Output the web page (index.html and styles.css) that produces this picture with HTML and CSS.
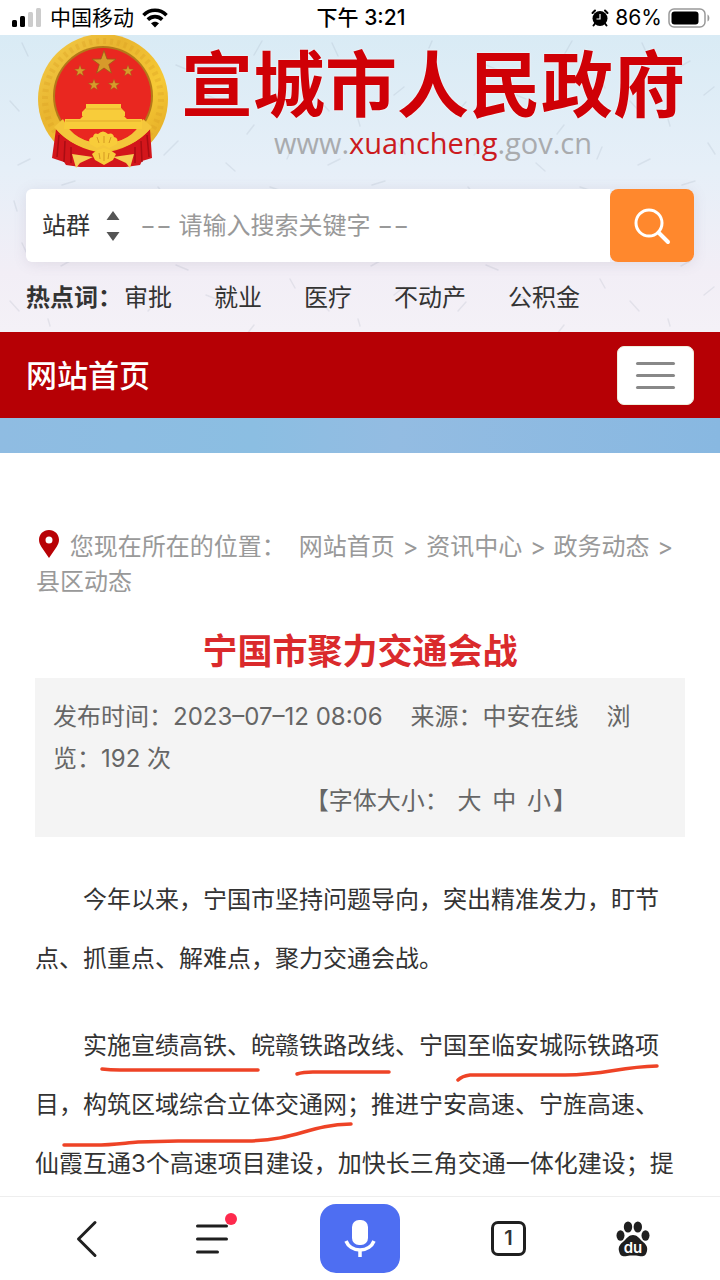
FILE: index.html
```html
<!DOCTYPE html>
<html lang="zh-CN">

<head>
    <meta charset="utf-8" />
    <meta name="viewport" content="width=device-width, initial-scale=1" />
    <title>宁国市聚力交通会战</title>
    <link rel="stylesheet" href="styles.css">
</head>

<body>

<!-- 状态栏 -->
<div class="status">
    <div class="status-left">
        <svg width="30" height="20" viewBox="0 0 30 20">
            <rect x="0" y="12" width="5" height="7" rx="1.5" fill="#000"/>
            <rect x="8" y="8" width="5" height="11" rx="1.5" fill="#000"/>
            <rect x="16" y="4" width="5" height="15" rx="1.5" fill="#ccc"/>
            <rect x="24" y="0" width="5" height="19" rx="1.5" fill="#ccc"/>
        </svg>
        <span>中国移动</span>
        <svg width="26" height="20" viewBox="0 0 26 20" fill="none" stroke="#000" stroke-width="3.6">
            <path d="M1.5 7.2C8 .6 18 .6 24.5 7.2"/>
            <path d="M5.8 11.6c4.200-4 10.200-4 14.400 0"/>
            <path d="M13 19.500l-4-4.200c2.200-2.100 5.800-2.100 8 0z" fill="#000" stroke="none"/>
        </svg>
    </div>
    <div class="status-time">下午 3:21</div>
    <div class="status-right">
        <svg width="18" height="18" viewBox="0 0 18 18">
            <circle cx="9" cy="9.500" r="7.500" fill="#000"/>
            <path d="M1.500 4L4 1.500M16.500 4L14 1.500M4 14.500l-1.500 2M14 14.500l1.500 2" stroke="#000" stroke-width="2" stroke-linecap="round"/>
            <path d="M9 5v5H5.500" stroke="#fff" stroke-width="1.200" fill="none"/>
        </svg>
        <span>86%</span>
        <svg width="42" height="20" viewBox="0 0 42 20">
            <rect x="1" y="1" width="36" height="18" rx="5" fill="none" stroke="#999" stroke-width="1.500"/>
            <rect x="3.500" y="3.500" width="27" height="13" rx="3" fill="#000"/>
            <path d="M39.500 6.500c2.500 1 2.500 6 0 7z" fill="#999"/>
        </svg>
    </div>
</div>

<!-- 头部 -->
<header class="header">
    <svg class="header-bg" width="100%" height="100%" aria-hidden="true">
        <defs>
            <pattern id="grain" width="310" height="200" patternUnits="userSpaceOnUse">
                <g fill="none" stroke="#8796a8" stroke-opacity=".16" stroke-width="1.500" stroke-linecap="round">
                    <path d="M22 8l6 13M70 26l-9 5M122 6l-3 7M176 30l12 5M262 6l-8 14M290 44l5 9"/>
                    <path d="M10 66l9 10M48 84l2 7M94 52l-10 8M148 76l8-9M206 60l10 4M254 90l-7 9"/>
                    <path d="M30 124l-12 6M88 108l7 11M130 116l3-13M178 106l-14 14M226 128l9 8M292 112l-5 12"/>
                    <path d="M14 166l3 10M62 150l13-4M110 176l-8 11M158 152l10 12M204 172l-3-8M270 152l12 4"/>
                    <path d="M42 192l11 5M134 192l-5 5M188 192l12-4M282 182l-7 12"/>
                </g>
            </pattern>
        </defs>
        <rect width="100%" height="100%" fill="url(#grain)"/>
    </svg>

    <a class="logo" href="#">
        <svg class="emblem" width="134" height="136" viewBox="0 0 134 136">
            <defs>
                <linearGradient id="gold" x1="0" y1="0" x2="1" y2="1">
                    <stop offset="0" stop-color="#f5cf4c"/>
                    <stop offset=".35" stop-color="#e9b52f"/>
                    <stop offset=".65" stop-color="#f6c935"/>
                    <stop offset="1" stop-color="#dc9f20"/>
                </linearGradient>
                <path id="star" d="M0-10L2.400-3.200 9.500-3.100 3.800 1.200 5.900 8.100 0 4 -5.900 8.100 -3.800 1.200 -9.500-3.100 -2.400-3.200z"/>
            </defs>
            <circle cx="67" cy="64" r="65" fill="url(#gold)"/>
            <circle cx="67" cy="64" r="58" fill="none" stroke="#d89d22" stroke-opacity=".3" stroke-width="6" stroke-dasharray="3 4"/>
            <circle cx="67" cy="61" r="50" fill="#b47819"/>
            <circle cx="67" cy="61" r="48" fill="#e92720"/>
            <!-- 红绸 -->
            <path d="M20 94q18 20 47 24 29-4 47-24l2 29-10 3-2 4-14 2H44l-14-2-2-3-12-4z" fill="#d3161b"/>
            <path d="M23 100l-2 22M29 106l-1 21M35 112v16M111 100l2 22M105 106l1 21M99 112v16" stroke="#a90d13" stroke-width="1.500"/>
            <path d="M18 92q18 22 49 24 31-2 49-24l-9-8Q96 108 67 108T27 84z" fill="#f4c63b"/>
            <g fill="#d79a2b" stroke="#916017" stroke-width=".6">
                <use href="#star" transform="translate(68 28) scale(1.250)"/>
                <use href="#star" transform="translate(44 36) scale(.600)"/>
                <use href="#star" transform="translate(92 36) scale(.600)"/>
                <use href="#star" transform="translate(58 50) scale(.600)"/>
                <use href="#star" transform="translate(78 50) scale(.600)"/>
            </g>
            <path d="M28 94h78v-10H91l-3-3H47l-3 3H29z" fill="#f8cc3a"/>
            <path d="M50 69h35v4l4 4v4H46v-4l4-4z" fill="#f8cc3a"/>
            <path d="M50 74h36M30 86h75" stroke="#e2ab2c" stroke-width="1"/>
            <path d="M35 95h64q-13 13-32 13T35 95z" fill="#e92720"/>
            <path d="M54 109q-3-6 3-7 1-5 5-3 5-5 10 0 5-2 6 3 5 1 3 7l-8 4-6-3-6 3z" fill="#f8cc3a"/>
            <path d="M56 119l5-4 7-2 6 2 6 4-3 6-9 5-9-5z" fill="#f8cc3a"/>
            <path d="M36 119l21 3-13 6-4 5zM98 119l-21 3 13 6 4 5z" fill="#f5cf55"/>
            <path d="M63 108l-2-6M68 108v-7M73 108l2-6M63 118l1 6M68 117v9M73 118l-1 6" stroke="#d49822" stroke-width="1"/>
        </svg>
        <span class="logo-text">
            <strong>宣城市人民政府</strong>
            <span class="logo-url">www.<b>xuancheng</b>.gov.cn</span>
        </span>
    </a>

    <form class="search">
        <div class="search-box">
            <label class="site">
                <select aria-label="站群">
                    <option>站群</option>
                </select>
                <svg width="14" height="30" viewBox="0 0 14 30" fill="#555">
                    <path d="M7 0l6.500 9H.5zM7 30l6.500-9H.5z"/>
                </svg>
            </label>
            <input type="text" aria-label="搜索关键字" placeholder="−− 请输入搜索关键字 −−">
        </div>
        <button type="button" class="search-btn" aria-label="搜索">
            <svg width="38" height="38" viewBox="0 0 38 38" fill="none" stroke="#fff" stroke-linecap="round">
                <circle cx="16" cy="16" r="13" stroke-width="3"/>
                <path d="M25.500 25.500L35 35" stroke-width="4"/>
            </svg>
        </button>
    </form>

    <div class="hot">
        <b>热点词：</b>
        <a href="#">审批</a>
        <a href="#">就业</a>
        <a href="#">医疗</a>
        <a href="#">不动产</a>
        <a href="#">公积金</a>
    </div>
</header>

<!-- 导航 -->
<nav class="nav">
    <a href="#">网站首页</a>
    <button type="button" class="nav-btn" aria-label="菜单">
        <span></span>
        <span></span>
        <span></span>
    </button>
</nav>
<div class="banner"></div>

<!-- 正文 -->
<main class="main">
    <div class="crumb">
        <svg width="20" height="28" viewBox="0 0 20 28">
            <path fill-rule="evenodd" d="M10 0C4.300 0 0 4.300 0 9.800c0 2.700 1 4.700 2.300 6.900L10 28l7.700-11.300C19 14.500 20 12.500 20 9.800 20 4.300 15.700 0 10 0zm0 6.500a3.500 3.500 0 1 1 0 7 3.500 3.500 0 0 1 0-7z" fill="#b80206"/>
        </svg>
        您现在所在的位置：&ensp;<a href="#">网站首页</a> &gt; <a href="#">资讯中心</a> &gt; <a href="#">政务动态</a> &gt; <a href="#">县区动态</a>
    </div>

    <h1 class="title">宁国市聚力交通会战</h1>

    <div class="info">
        <p>发布时间：2023–07–12 08:06<span class="source">来源：中安在线</span>浏览：192 次</p>
        <p class="size">【字体大小： <a href="#">大</a> <a href="#">中</a> <a href="#">小</a>】</p>
    </div>

    <article class="article">
        <p>今年以来，宁国市坚持问题导向，突出精准发力，盯节点、抓重点、解难点，聚力交通会战。</p>
        <p class="marked">实施宣绩高铁、皖赣铁路改线、宁国至临安城际铁路项目，构筑区域综合立体交通网；推进宁安高速、宁旌高速、仙霞互通3个高速项目建设，加快长三角交通一体化建设；提
            <!-- 手写红线 -->
            <svg class="marks" width="650" height="150" viewBox="0 0 650 150" fill="none" stroke="#ee4326" stroke-width="3.500" stroke-linecap="round">
                <path d="M67 53q8 1 18 1H223"/>
                <path d="M262 58q6-2 16-2H354"/>
                <path d="M423 64q4-4 12-5H530c42 0 52-8 92-9"/>
                <path d="M29 129h30c20 0 30-2 44-3l40-1H213c50-1 60-16 103-17"/>
            </svg>
        </p>
    </article>
</main>

<!-- 底部工具栏 -->
<footer class="toolbar">
    <button type="button" aria-label="返回">
        <svg width="22" height="38" viewBox="0 0 22 38" fill="none" stroke="#1f1f1f" stroke-width="3" stroke-linecap="round" stroke-linejoin="round">
            <path d="M19 2.500L2.500 19 19 35.500"/>
        </svg>
    </button>
    <button type="button" class="menu" aria-label="菜单">
        <svg width="32" height="30" viewBox="0 0 32 30" stroke="#1f1f1f" stroke-width="3" stroke-linecap="round">
            <path d="M1.500 2h29M1.500 15h29M1.500 28h20"/>
        </svg>
        <i class="dot"></i>
    </button>
    <button type="button" class="mic" aria-label="语音">
        <svg width="34" height="38" viewBox="0 0 34 38">
            <rect x="9" y="0" width="16" height="25" rx="7" fill="#fff"/>
            <path d="M3 21c2 5 7 9 14 9s12-4 14-9M17 30v7" fill="none" stroke="#fff" stroke-width="3.500"/>
        </svg>
    </button>
    <button type="button" aria-label="窗口">
        <span class="tab">1</span>
    </button>
    <button type="button" aria-label="百度首页">
        <svg width="34" height="36" viewBox="0 0 34 36" fill="#1f1f1f">
            <ellipse cx="4.500" cy="14.500" rx="4" ry="5.200"/>
            <ellipse cx="12" cy="6" rx="4.200" ry="5.500"/>
            <ellipse cx="21.800" cy="6" rx="4.200" ry="5.500"/>
            <ellipse cx="29.500" cy="14.500" rx="4" ry="5.200"/>
            <path d="M17 14c4 0 6 3 9 6 4 3 6 6 5 10-1 5-4 6-8 5-4-.6-8-.6-12 0-4 1-7 0-8-5-1-4 1-7 5-10 3-3 5-6 9-6z"/>
            <text x="17" y="32" text-anchor="middle" fill="#fff" class="du">du</text>
        </svg>
    </button>
</footer>

</body>

</html>
```

FILE: styles.css
```css
* {
    padding: 0;
    margin: 0;
    box-sizing: border-box;
}

body {
    height: 100vh;
    display: flex;
    flex-direction: column;
    overflow: hidden;
    background: #fff;
    color: #333;
    font-family: Inter, "Noto Sans CJK SC", sans-serif;
    font-size: 24px;
}

a {
    color: inherit;
    text-decoration: none;
}

svg {
    display: block;
    flex: none;
}

button,
input,
select {
    border: 0;
    background: none;
    font: inherit;
    color: inherit;
}

/* 状态栏 */
.status {
    display: grid;
    grid-template-columns: 1fr auto 1fr;
    align-items: center;
    height: 35px;
    flex: none;
    padding: 0 10px 0 12px;
    color: #000;
    font-size: 21px;
    line-height: 35px;
}

.status-left,
.status-right {
    display: flex;
    align-items: center;
    gap: 8px;
}

.status-right {
    justify-content: flex-end;
    gap: 6px;
}

.status-time {
    font-weight: 500;
}

/* 头部 */
.header {
    position: relative;
    flex: none;
    padding: 0 26px 16px;
    background: linear-gradient(#d9ebf5, #e6eff8 45%, #f2eef6 80%, #f4f1f7);
}

.header-bg {
    position: absolute;
    left: 0;
    top: 0;
}

.logo {
    position: relative;
    display: flex;
    align-items: flex-start;
    gap: 11px;
    height: 154px;
    padding-left: 10px;
}

.logo-text {
    display: flex;
    flex-direction: column;
    align-items: center;
    padding-top: 10px;
}

.logo-text strong {
    color: #cf0006;
    font-size: 72px;
    font-weight: 700;
    line-height: 80px;
    white-space: nowrap;
    text-shadow: 0 0 2px #fff;
}

.logo-url {
    color: #a9abae;
    font-family: "Open Sans", "Noto Sans", sans-serif;
    font-size: 29px;
    line-height: 36px;
}

.logo-url b {
    color: #cb1a20;
    font-weight: 500;
}

.search {
    position: relative;
    display: flex;
    height: 73px;
    border-radius: 8px;
    box-shadow: 0 2px 14px rgba(120, 100, 130, 0.14);
}

.search-box {
    flex: 1;
    display: flex;
    align-items: center;
    min-width: 0;
    padding-left: 16px;
    background: #fff;
    border-radius: 6px 0 0 6px;
}

.site {
    display: flex;
    align-items: center;
    gap: 15px;
}

.site select {
    appearance: none;
    outline: none;
    width: 49px;
}

.search-box input {
    flex: 1;
    min-width: 0;
    height: 100%;
    margin-left: 20px;
    outline: none;
}

.search-box input::placeholder {
    color: #999;
    opacity: 1;
}

.search-btn {
    display: flex;
    align-items: center;
    justify-content: center;
    width: 84px;
    background: #ff882d;
    border-radius: 8px;
}

.hot {
    position: relative;
    display: flex;
    gap: 42px;
    padding-top: 18px;
    line-height: 36px;
    white-space: nowrap;
}

.hot b {
    margin-right: -40px;
}

/* 导航 */
.nav {
    display: flex;
    align-items: center;
    justify-content: space-between;
    flex: none;
    height: 86px;
    padding: 0 26px;
    background: #b60005;
    color: #fff;
    font-size: 31px;
    font-weight: 500;
}

.nav a {
    padding-bottom: 4px;
}

.nav-btn {
    display: flex;
    flex-direction: column;
    align-items: center;
    justify-content: center;
    gap: 9px;
    width: 77px;
    height: 59px;
    background: #fff;
    border: 1px solid #eed;
    border-radius: 7px;
}

.nav-btn span {
    width: 39px;
    height: 3px;
    border-radius: 2px;
    background: #888;
}

.banner {
    flex: none;
    height: 35px;
    background: linear-gradient(90deg, #8fbce2, #8bbee2 35%, #93bce2 55%, #88b8e1);
}

/* 正文 */
.main {
    flex: 1;
    min-height: 0;
    overflow: hidden;
    padding: 76px 35px 0;
}

.crumb {
    color: #999;
    line-height: 35px;
}

.crumb svg {
    display: inline-block;
    margin: 0 4px 0 4px;
    vertical-align: -3px;
}

.crumb a {
    margin: 0 1px;
}

.title {
    padding-top: 25px;
    color: #da2a2c;
    font-size: 35px;
    font-weight: 700;
    line-height: 54px;
    text-align: center;
}

.info {
    padding: 18px 18px 15px;
    background: #f4f4f4;
    color: #666;
    line-height: 42px;
}

.source {
    margin: 0 28px;
}

.size {
    padding-right: 90px;
    text-align: right;
}

.size a {
    margin: 0 2px;
}

.article {
    padding: 33px 9px 0 0;
    line-height: 59px;
}

.article p {
    margin-bottom: 28px;
    text-indent: 2em;
}

.marked {
    position: relative;
}

.marks {
    position: absolute;
    left: 0;
    top: 0;
}

/* 底部工具栏 */
.toolbar {
    display: flex;
    align-items: center;
    justify-content: space-between;
    flex: none;
    height: 84px;
    padding: 0 65px;
    background: #fff;
    border-top: 1px solid #eee;
}

.toolbar button {
    display: flex;
    align-items: center;
    justify-content: center;
    width: 44px;
    height: 69px;
}

.toolbar .menu {
    position: relative;
}

.dot {
    position: absolute;
    right: -3px;
    top: 9px;
    width: 12px;
    height: 12px;
    border-radius: 50%;
    background: #fe2a4d;
}

.toolbar .mic {
    width: 80px;
    margin: 0 6px;
    background: #4e6ef2;
    border-radius: 16px;
}

.tab {
    width: 35px;
    height: 35px;
    border: 3px solid #1f1f1f;
    border-radius: 7px;
    font-size: 20px;
    font-weight: 600;
    line-height: 29px;
    text-align: center;
}

.du {
    font-family: Inter, sans-serif;
    font-size: 15px;
    font-weight: 600;
}
```
